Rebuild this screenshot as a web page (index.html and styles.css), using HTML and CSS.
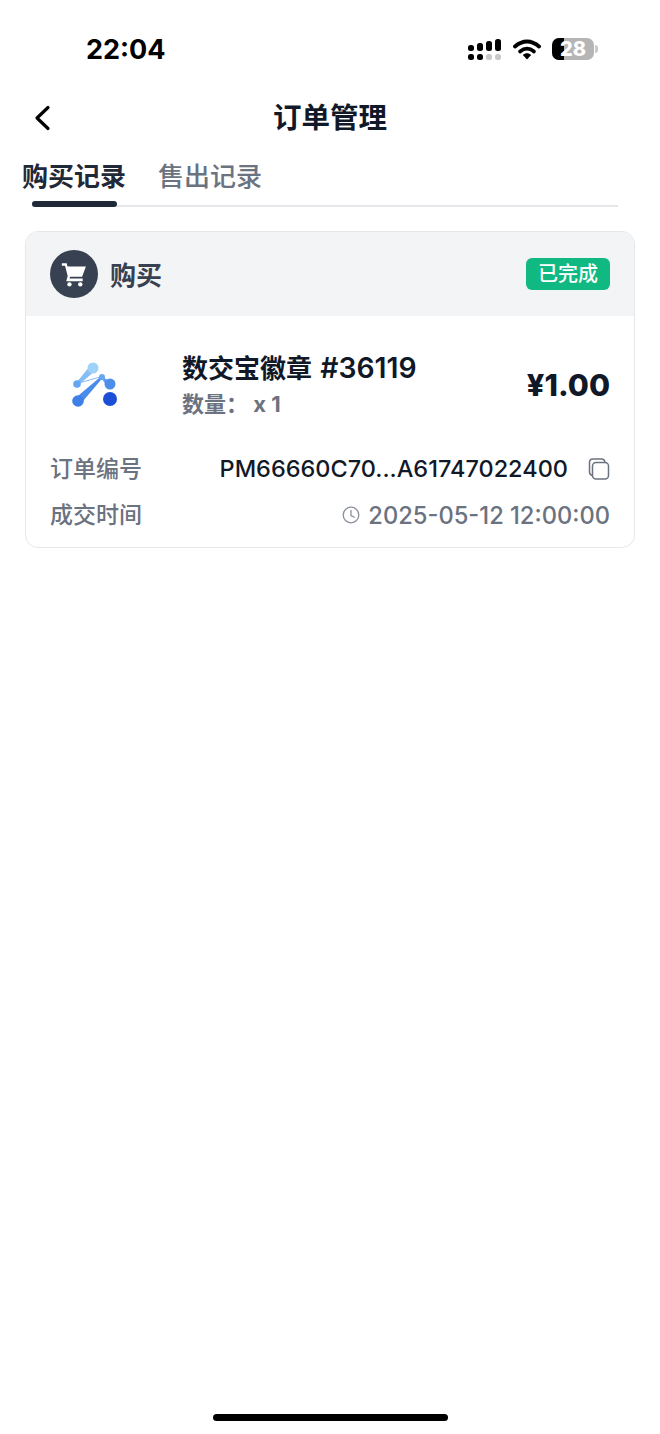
FILE: index.html
```html
<!DOCTYPE html>
<html lang="zh-CN">
<head>
<meta charset="utf-8">
<title>订单管理</title>
<link rel="stylesheet" href="styles.css">
</head>
<body>
<div class="app">
  <header class="status">
    <span class="time">22:04</span>
    <div class="status-icons">
      <svg class="signal" width="33" height="22" viewBox="0 0 33 22">
        <g fill="#000">
          <rect x="0" y="6" width="6" height="6" rx="2.500"/>
          <rect x="9" y="4" width="6" height="8" rx="2.500"/>
          <rect x="18" y="2" width="6" height="10" rx="2.500"/>
          <rect x="27" y="0" width="6" height="12" rx="2.500"/>
          <rect x="0" y="15" width="6" height="6" rx="2.500"/>
          <rect x="9" y="15" width="6" height="6" rx="2.500"/>
        </g>
        <g fill="#c9c9c9">
          <rect x="18" y="15" width="6" height="6" rx="2.500"/>
          <rect x="27" y="15" width="6" height="6" rx="2.500"/>
        </g>
      </svg>
      <svg class="wifi" width="28" height="21" viewBox="0 0 28 21">
        <path d="M2 7.500C9.500 .8 18.500 .8 26 7.500" fill="none" stroke="#000" stroke-width="3.800" stroke-linecap="round"/>
        <path d="M7 12.500C11.500 8.700 16.500 8.700 21 12.500" fill="none" stroke="#000" stroke-width="3.600" stroke-linecap="round"/>
        <path d="M9.800 16C12.500 13.500 15.500 13.500 18.200 16L14 20.500Z" fill="#000"/>
      </svg>
      <div class="battery">
        <div class="battery-body">
          <div class="battery-fill"></div>
          <span class="battery-num">28</span>
        </div>
        <div class="battery-cap"></div>
      </div>
    </div>
  </header>

  <nav class="nav">
    <svg class="back" width="18" height="26" viewBox="0 0 18 26">
      <path d="M15 2.500L4 13L15 23.500" fill="none" stroke="#000" stroke-width="3.200" stroke-linecap="round" stroke-linejoin="round"/>
    </svg>
    <h1 class="nav-title">订单管理</h1>
  </nav>

  <div class="tabs">
    <span class="tab tab-active">购买记录</span>
    <span class="tab">售出记录</span>
  </div>
  <div class="tab-track">
    <div class="tab-ink"></div>
  </div>

  <section class="card">
    <div class="card-head">
      <div class="kind">
        <span class="kind-icon">
          <svg width="26" height="26" viewBox="0 0 24 24">
            <path d="M.8 2H5.300L6 5H23L19.500 14.500H8.400L7.800 16.200H20V18.600H4.800L6.200 13.800L3.700 4.400H.8Z" fill="#fff"/>
            <circle cx="7.800" cy="21.500" r="2" fill="#fff"/>
            <circle cx="17.800" cy="21.500" r="2" fill="#fff"/>
          </svg>
        </span>
        <span class="kind-label">购买</span>
      </div>
      <span class="badge">已完成</span>
    </div>
    <div class="card-body">
      <div class="product">
        <div class="logo">
          <svg width="60" height="60" viewBox="0 0 60 60">
            <path d="M28.500 14.500L33.500 19.500L16 34.500L14 32Z" fill="#86bdf5"/>
            <path d="M15 32.500L40 25.500" stroke="#8dbdf6" stroke-width="1.200" fill="none"/>
            <path d="M40 25L46 29.500L45 35L39.500 27.500Z" fill="#5fa0f0"/>
            <path d="M13.500 47L39.500 25L41 26.500L18.500 53Z" fill="#4a8bec"/>
            <circle cx="31" cy="17" r="5.500" fill="#9fd2f8"/>
            <circle cx="15" cy="33" r="3.800" fill="#63a6f1"/>
            <circle cx="40" cy="26" r="3" fill="#68a8f2"/>
            <circle cx="48" cy="33" r="5.500" fill="#4e8eea"/>
            <circle cx="16" cy="50" r="5.800" fill="#3f7fe8"/>
            <circle cx="48" cy="48" r="7" fill="#1d4ed8"/>
          </svg>
        </div>
        <div class="product-info">
          <div class="product-name">数交宝徽章 <span class="product-no">#36119</span></div>
          <div class="product-qty">数量： x 1</div>
        </div>
        <div class="price">¥1.00</div>
      </div>
      <div class="row">
        <span class="row-label">订单编号</span>
        <div class="row-value">
          <span class="order-no">PM66660C70...A61747022400</span>
          <svg class="copy" width="22" height="22" viewBox="0 0 22 22" fill="none" stroke="#6b7280" stroke-width="1.500">
            <rect x="4.500" y="4.500" width="16" height="16.500" rx="3.500"/>
            <path d="M4.500 17.500C2.500 17 1.500 16 1.500 14V4.500C1.500 2.500 2.800 1 5 1H13.500C15.500 1 16.800 2.500 17 4.500"/>
          </svg>
        </div>
      </div>
      <div class="row row-time">
        <span class="row-label">成交时间</span>
        <div class="row-value">
          <svg class="clock" width="18" height="18" viewBox="0 0 18 18" fill="none" stroke="#8b919c" stroke-width="1.300">
            <circle cx="9" cy="9" r="7.800"/>
            <path d="M9 4.500V9.500L12.300 11.300" stroke-linecap="round"/>
          </svg>
          <span class="time-value">2025-05-12 12:00:00</span>
        </div>
      </div>
    </div>
  </section>

  <div class="home-bar"></div>
</div>
</body>
</html>
```
FILE: styles.css
```css
* {
  box-sizing: border-box;
}

html,
body {
  margin: 0;
  padding: 0;
  background: #fff;
}

body {
  font-family: Inter, "Noto Sans CJK SC", "Liberation Sans", sans-serif;
  color: #111827;
}

.app {
  width: 660px;
  height: 1434px;
  display: flex;
  flex-direction: column;
  overflow: hidden;
}

.status {
  height: 98px;
  padding: 33px 62px 0 86px;
  display: flex;
  justify-content: space-between;
  align-items: flex-start;
}

.time {
  padding-top: 1px;
  font-size: 27px;
  line-height: 32px;
  font-weight: 700;
  color: #000;
}

.status-icons {
  display: flex;
  align-items: center;
  gap: 11px;
  height: 32px;
}

.signal {
  margin-top: 2px;
  margin-right: 1px;
}

.battery {
  display: flex;
  align-items: center;
  gap: 1px;
}

.battery-body {
  position: relative;
  width: 42px;
  height: 22px;
  border-radius: 7px;
  background: #b5b5b5;
  overflow: hidden;
  display: flex;
  align-items: center;
  justify-content: center;
}

.battery-fill {
  position: absolute;
  left: 0;
  top: 0;
  bottom: 0;
  width: 12px;
  background: #000;
}

.battery-num {
  position: relative;
  font-size: 20px;
  font-weight: 800;
  color: #fff;
  line-height: 22px;
}

.battery-cap {
  width: 3px;
  height: 8px;
  border-radius: 0 3px 3px 0;
  background: #c9c9c9;
}

.nav {
  position: relative;
  height: 40px;
  display: flex;
  align-items: center;
  justify-content: center;
}

.back {
  position: absolute;
  left: 33px;
  top: 7px;
}

.nav-title {
  margin: 0;
  font-size: 28.500px;
  line-height: 40px;
  font-weight: 700;
  color: #111827;
}

.tabs {
  margin: 20px 42px 0 22px;
  height: 47px;
  display: flex;
  gap: 32px;
}

.tab {
  font-size: 26px;
  line-height: 38px;
  font-weight: 500;
  color: #6b7280;
}

.tab-active {
  font-weight: 700;
  color: #1f2937;
}

.tab-track {
  position: relative;
  margin: 0 42px 0 32px;
  height: 2px;
  background: #e5e7eb;
}

.tab-ink {
  position: absolute;
  left: 0;
  bottom: 0;
  width: 85px;
  height: 6px;
  border-radius: 3px;
  background: #1f2937;
}

.card {
  margin: 24px 25px 0;
  height: 317px;
  border: 1.500px solid #e5e7eb;
  border-radius: 13px;
  overflow: hidden;
}

.card-head {
  height: 84px;
  padding: 0 24px;
  background: #f3f4f6;
  display: flex;
  align-items: center;
  justify-content: space-between;
}

.kind {
  display: flex;
  align-items: center;
  gap: 12px;
}

.kind-icon {
  width: 48px;
  height: 48px;
  border-radius: 50%;
  background: #374151;
  display: flex;
  align-items: center;
  justify-content: center;
}

.kind-label {
  font-size: 26px;
  line-height: 36px;
  padding-top: 3px;
  font-weight: 700;
  color: #374151;
}

.badge {
  width: 84px;
  height: 32px;
  border-radius: 6px;
  background: #10b981;
  color: #fff;
  font-size: 20px;
  line-height: 32px;
  font-weight: 500;
  text-align: center;
}

.card-body {
  padding: 0 24px;
}

.product {
  height: 130px;
  padding-top: 8px;
  display: flex;
  align-items: center;
}

.logo {
  width: 60px;
  height: 60px;
  margin-left: 12px;
  margin-top: -8px;
}

.product-info {
  margin-left: 60px;
  flex: 1;
}

.product-name {
  padding-top: 1px;
  font-size: 26px;
  line-height: 36px;
  font-weight: 700;
  color: #111827;
}

.product-no {
  margin-left: 2px;
  font-size: 28.300px;
  font-weight: 600;
}

.product-qty {
  margin-top: -1px;
  font-size: 22px;
  line-height: 36px;
  font-weight: 700;
  color: #6b7280;
}

.price {
  font-size: 30.500px;
  line-height: 40px;
  font-weight: 800;
  color: #111827;
}

.row {
  display: flex;
  align-items: center;
  justify-content: space-between;
  height: 46px;
}

.row-label {
  font-size: 23px;
  line-height: 34px;
  font-weight: 500;
  color: #6b7280;
}

.row-value {
  display: flex;
  align-items: center;
}

.order-no {
  font-size: 23.500px;
  line-height: 34px;
  font-weight: 500;
  color: #111827;
}

.copy {
  margin-left: 20px;
}

.clock {
  margin-right: 8px;
}

.time-value {
  padding-top: 1px;
  font-size: 23.700px;
  line-height: 34px;
  font-weight: 500;
  color: #6b7280;
}

.home-bar {
  margin: auto auto 13px;
  width: 235px;
  height: 7px;
  border-radius: 4px;
  background: #000;
}
```
